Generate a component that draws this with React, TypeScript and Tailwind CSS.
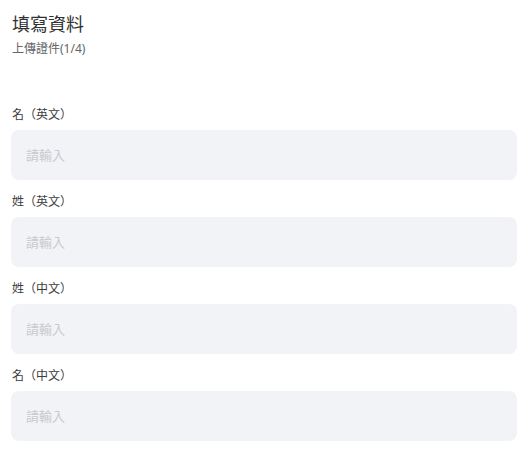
const fields = ['名（英文）', '姓（英文）', '姓（中文）', '名（中文）']

export default function App() {
  return (
    <div
      className="min-h-screen bg-white pl-[11px] pr-[14px] pt-[11px]"
      style={{ fontFamily: '"Noto Sans", "Noto Sans CJK TC", sans-serif' }}
    >
      <h1 className="text-[18px] leading-[26px] text-[#323233] pl-px">填寫資料</h1>
      <p className="mt-[3px] text-[12px] leading-[18px] text-[#646566] pl-px">上傳證件(1/4)</p>
      <div className="mt-[48px] flex flex-col gap-[13px]">
        {fields.map((label) => (
          <div key={label}>
            <label className="block text-[12px] leading-[18px] text-[#3c3c40] pl-px">{label}</label>
            <input
              type="text"
              placeholder="請輸入"
              className="mt-[6px] block h-[50px] w-full rounded-lg bg-[#f2f3f7] px-[15px] text-[13px] text-[#323233] outline-none placeholder:text-[#c8c9cc]"
            />
          </div>
        ))}
      </div>
    </div>
  )
}
